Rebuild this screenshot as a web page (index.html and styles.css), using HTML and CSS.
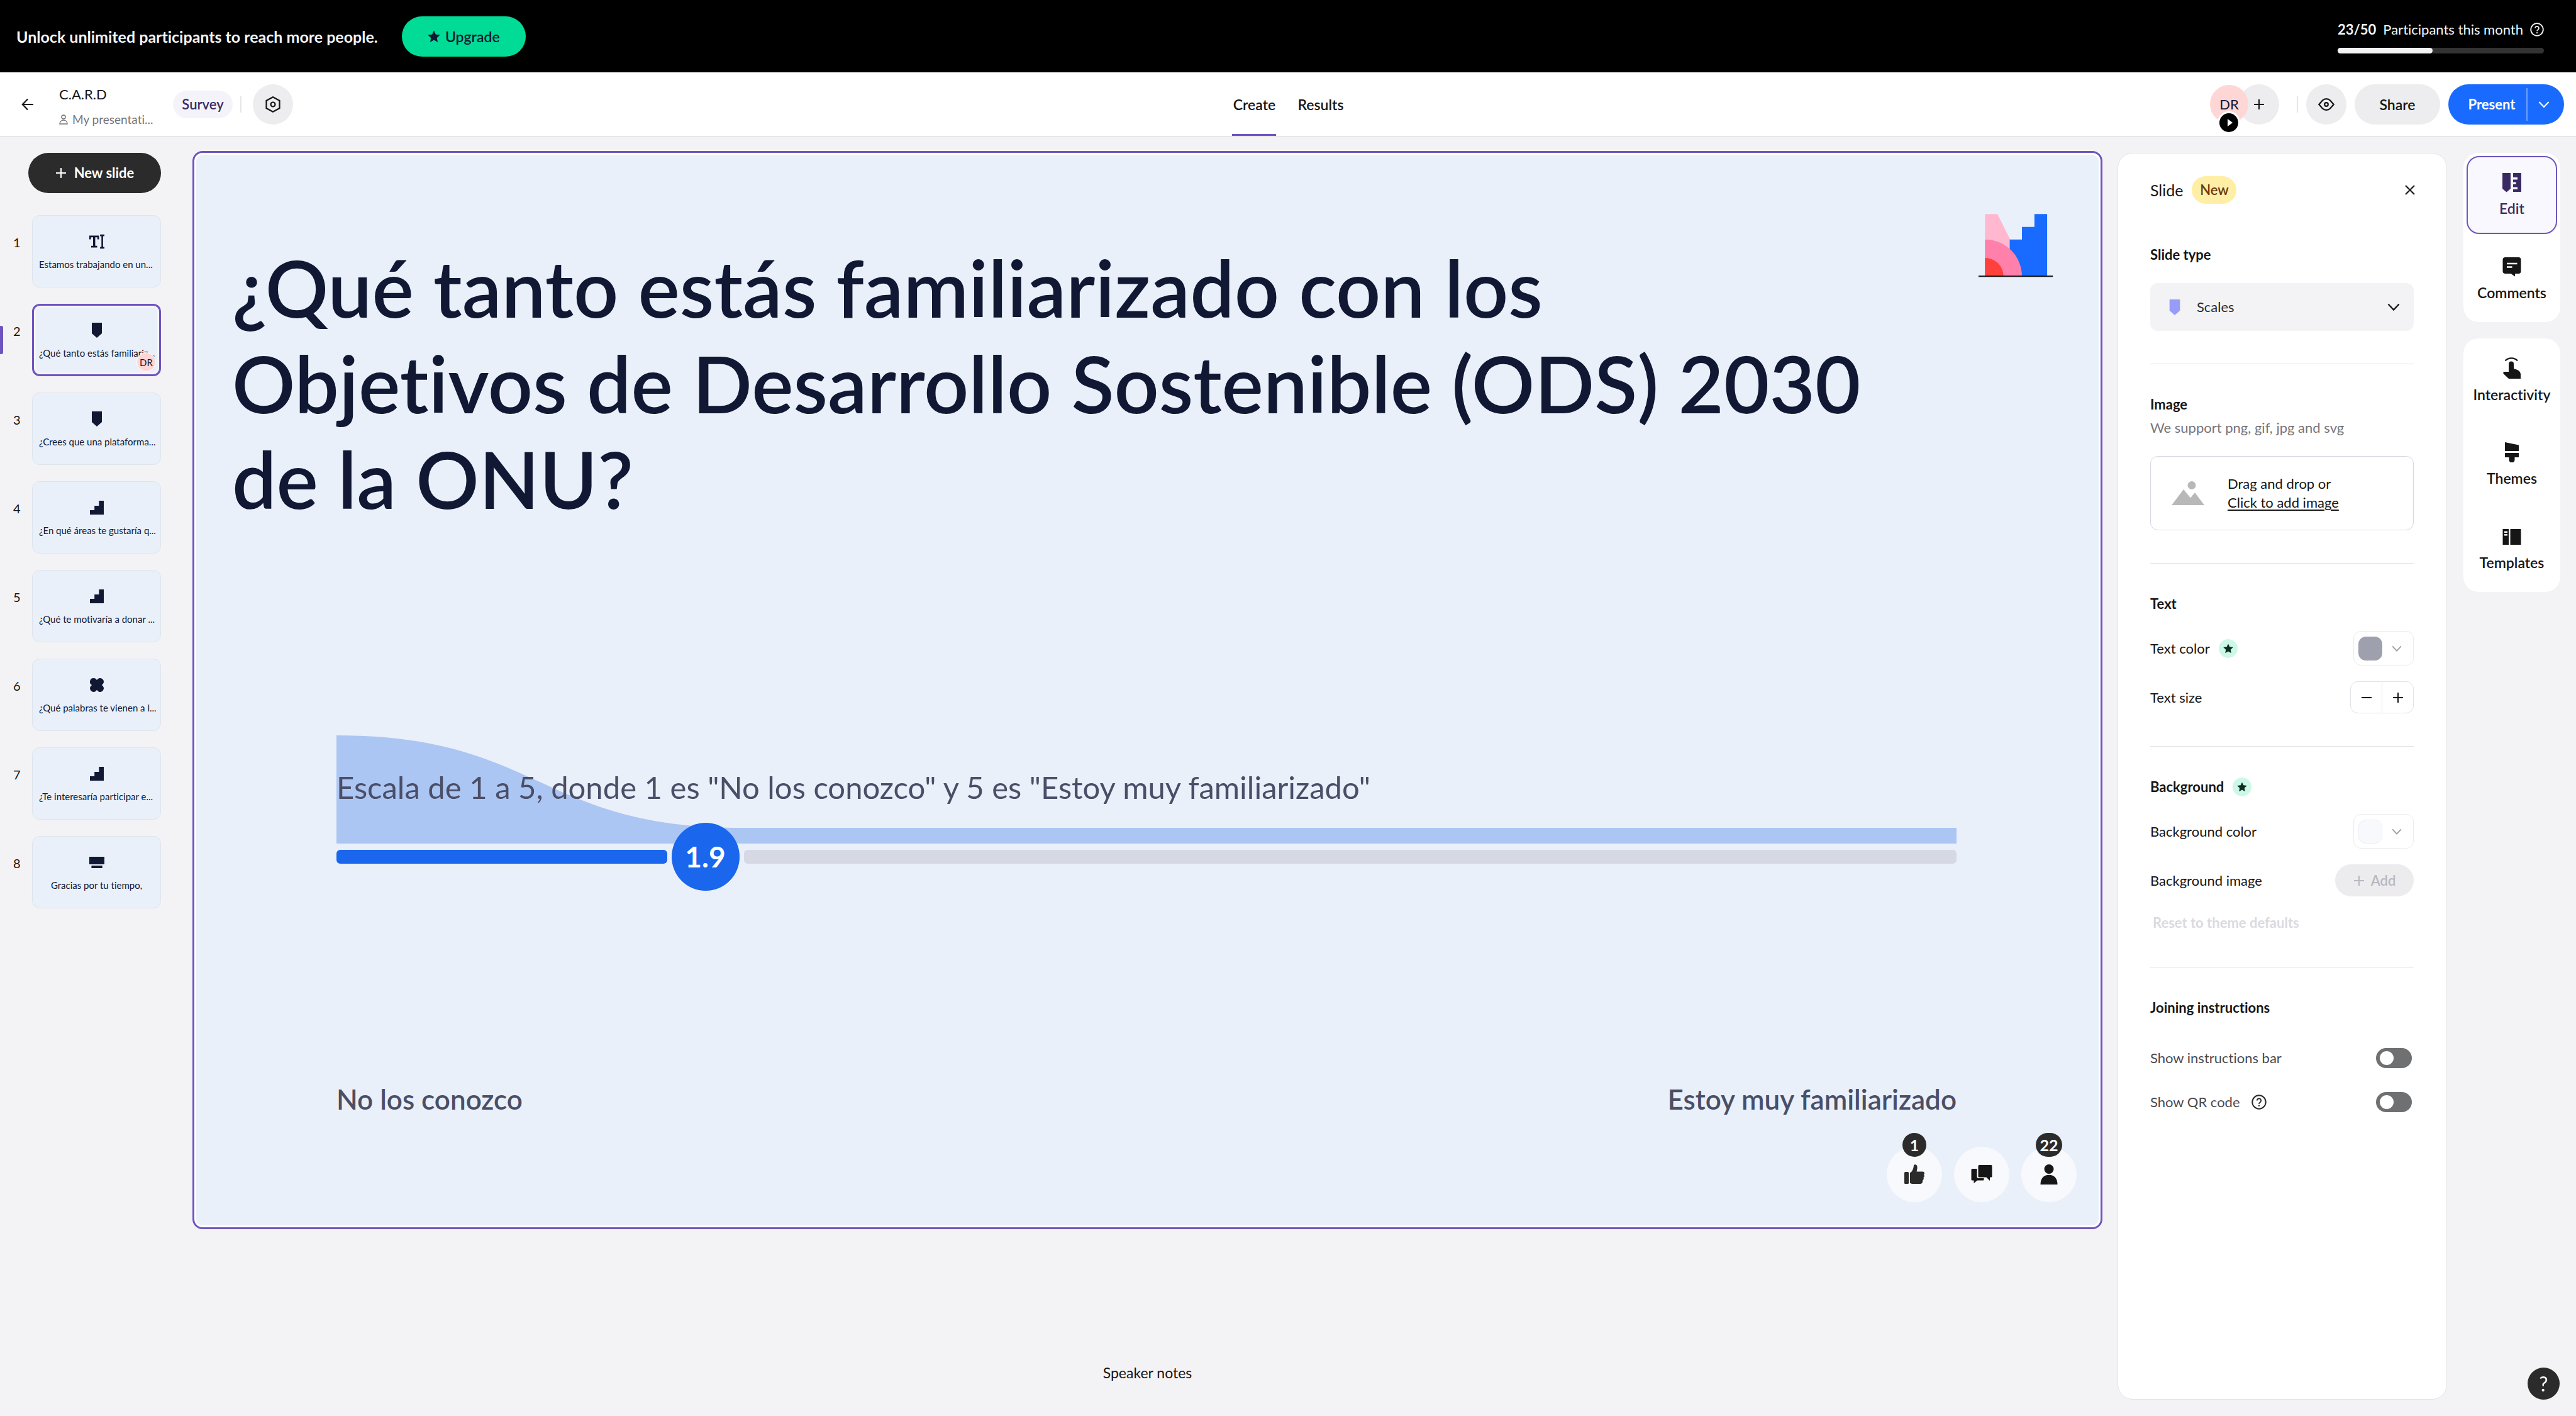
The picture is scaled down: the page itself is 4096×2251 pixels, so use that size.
FILE: index.html
```html
<!DOCTYPE html>
<html lang="en">
<head>
<meta charset="utf-8">
<meta name="viewport" content="width=device-width, initial-scale=1">
<title>C.A.R.D</title>
<link rel="stylesheet" href="styles.css">
</head>
<body>
<svg class="defs" aria-hidden="true">
  <symbol id="star" viewBox="0 0 20 20"><path d="M10 .5l2.900 6.200 6.800.8-5 4.700 1.300 6.800-6-3.400-6 3.400 1.300-6.800-5-4.700 6.800-.8z" fill="currentColor"/></symbol>
  <symbol id="plus" viewBox="0 0 18 18"><path d="M9 1v16M1 9h16" stroke="currentColor" stroke-width="2" fill="none"/></symbol>
  <symbol id="minus" viewBox="0 0 18 18"><path d="M1 9h16" stroke="currentColor" stroke-width="2" fill="none"/></symbol>
  <symbol id="chevron" viewBox="0 0 20 20"><path d="M1.500 5.500L10 14.500 18.500 5.500" stroke="currentColor" stroke-width="2.400" fill="none"/></symbol>
  <symbol id="question" viewBox="0 0 24 24"><circle cx="12" cy="12" r="10.700" stroke="currentColor" stroke-width="2" fill="none"/><path d="M8.800 9.600a3.200 3.200 0 1 1 5 2.600c-1.200.8-1.800 1.300-1.800 2.600" stroke="currentColor" stroke-width="1.900" fill="none"/><circle cx="12" cy="17.600" r="1.200" fill="currentColor"/></symbol>
  <symbol id="type-text" viewBox="0 0 28 26"><path d="M0 2h18v7h-3V5h-4v16h3.500v3h-11v-3H7V5H3v4H0z M20 0h8v3h-2.500v20H28v3h-8v-3h2.500V3H20z" fill="currentColor"/></symbol>
  <symbol id="type-scales" viewBox="0 0 16 24"><path d="M0 0h16v17l-8 7-8-7z" fill="currentColor"/></symbol>
  <symbol id="type-bars" viewBox="-1 -1 24 24"><path d="M0 15h7.200V8h7.200V0H22v22H0z" fill="currentColor"/></symbol>
  <symbol id="type-cloud" viewBox="-1 -1 24 24"><path d="M5.800 0A5.800 5.800 0 0 1 11 3.200 5.800 5.800 0 1 1 18.800 11 5.800 5.800 0 1 1 11 18.800 5.800 5.800 0 1 1 3.200 11 5.800 5.800 0 0 1 5.800 0z" fill="currentColor"/></symbol>
  <symbol id="type-end" viewBox="0 0 24 18"><path d="M0 0h24v12H0zM3.400 14h17.300v4H3.400z" fill="currentColor"/></symbol>
</svg>

<div class="app">
  <div class="banner">
    <div class="banner-offer">
      <p class="banner-text">Unlock unlimited participants to reach more people.</p>
      <button class="upgrade"><svg class="i20"><use href="#star"/></svg>Upgrade</button>
    </div>
    <div class="quota">
      <div class="quota-line"><strong>23/50</strong><span>Participants this month</span><svg class="i22"><use href="#question"/></svg></div>
      <div class="quota-bar"><div class="quota-fill" style="width:46%"></div></div>
    </div>
  </div>

  <header class="topbar">
    <div class="topbar-left">
      <button class="back" aria-label="Back"><svg width="20" height="20" viewBox="0 0 20 20"><path d="M10 1.500L1.800 10 10 18.500M2 10h17" stroke="currentColor" stroke-width="2.200" fill="none"/></svg></button>
      <div class="doc">
        <div class="doc-name">C.A.R.D</div>
        <a class="doc-folder" href="#"><svg width="14" height="16" viewBox="0 0 14 16"><circle cx="7" cy="4" r="3" stroke="currentColor" stroke-width="1.500" fill="none"/><path d="M1 15c0-8 12-8 12 0z" stroke="currentColor" stroke-width="1.500" fill="none"/></svg>My presentati...</a>
      </div>
      <span class="pill survey">Survey</span>
      <span class="divider"></span>
      <button class="round" aria-label="Settings"><svg width="24" height="26" viewBox="0 0 24 26"><path d="M12 1.300L22.500 7v12L12 24.700 1.500 19V7z" stroke="currentColor" stroke-width="2.200" fill="none"/><circle cx="12" cy="13" r="3.500" stroke="currentColor" stroke-width="2.200" fill="none"/></svg></button>
    </div>
    <nav class="tabs">
      <a class="tab tab-on" href="#">Create</a>
      <a class="tab" href="#">Results</a>
    </nav>
    <div class="topbar-right">
      <div class="avatar">DR<span class="live"><svg width="8" height="12" viewBox="0 0 8 12"><path d="M0 0l8 6-8 6z" fill="#fff"/></svg></span></div>
      <button class="round invite" aria-label="Invite"><svg class="i18"><use href="#plus"/></svg></button>
      <span class="divider"></span>
      <button class="round" aria-label="Preview"><svg width="26" height="20" viewBox="0 0 26 20"><path d="M1.300 10L7 3.500Q9.500 1.200 13 1.200T19 3.500L24.700 10 19 16.500Q16.500 18.800 13 18.800T7 16.500z" stroke="currentColor" stroke-width="2.200" fill="none"/><circle cx="13" cy="10" r="2.800" stroke="currentColor" stroke-width="2.200" fill="none"/></svg></button>
      <button class="share">Share</button>
      <div class="present">
        <button class="present-main">Present</button>
        <button class="present-more" aria-label="Present options"><svg class="i18"><use href="#chevron"/></svg></button>
      </div>
    </div>
  </header>

  <main class="workspace">
    <aside class="slides">
      <button class="new-slide"><svg class="i18"><use href="#plus"/></svg>New slide</button>
      <ol class="slide-list">
        <li class="slide-item"><span class="slide-no">1</span><a class="thumb" href="#"><svg class="thumb-icon"><use href="#type-text"/></svg><span class="thumb-text">Estamos trabajando en un...</span></a></li>
        <li class="slide-item current"><span class="slide-no">2</span><a class="thumb" href="#"><svg class="thumb-icon"><use href="#type-scales"/></svg><span class="thumb-text">¿Qué tanto estás familiariz...</span><span class="thumb-user">DR</span></a></li>
        <li class="slide-item"><span class="slide-no">3</span><a class="thumb" href="#"><svg class="thumb-icon"><use href="#type-scales"/></svg><span class="thumb-text">¿Crees que una plataforma...</span></a></li>
        <li class="slide-item"><span class="slide-no">4</span><a class="thumb" href="#"><svg class="thumb-icon"><use href="#type-bars"/></svg><span class="thumb-text">¿En qué áreas te gustaría q...</span></a></li>
        <li class="slide-item"><span class="slide-no">5</span><a class="thumb" href="#"><svg class="thumb-icon"><use href="#type-bars"/></svg><span class="thumb-text">¿Qué te motivaría a donar ...</span></a></li>
        <li class="slide-item"><span class="slide-no">6</span><a class="thumb" href="#"><svg class="thumb-icon"><use href="#type-cloud"/></svg><span class="thumb-text">¿Qué palabras te vienen a l...</span></a></li>
        <li class="slide-item"><span class="slide-no">7</span><a class="thumb" href="#"><svg class="thumb-icon"><use href="#type-bars"/></svg><span class="thumb-text">¿Te interesaría participar e...</span></a></li>
        <li class="slide-item"><span class="slide-no">8</span><a class="thumb" href="#"><svg class="thumb-icon"><use href="#type-end"/></svg><span class="thumb-text short">Gracias por tu tiempo,</span></a></li>
      </ol>
    </aside>

    <section class="stage">
      <div class="canvas">
        <div class="slide">
          <div class="slide-head">
            <h1 class="question">¿Qué tanto estás familiarizado con los<br>Objetivos de Desarrollo Sostenible (ODS) 2030<br>de la ONU?</h1>
            <svg class="logo" viewBox="0 0 150 128"><path d="M13 0h25l25 50v74H13z" fill="#ffb8d0"/><path d="M62.500 51H87V26h25V0h25.500v124h-75z" fill="#196bff"/><path d="M13 51a74 74 0 0 1 74 73H13z" fill="#ff80aa"/><path d="M13 88a37 37 0 0 1 37 36H13z" fill="#ff403d"/><path d="M0 124.800h149" stroke="#1c1c1c" stroke-width="2.800"/></svg>
          </div>
          <div class="scale">
            <div class="spread">
              <svg class="spread-area" viewBox="0 0 4 172" preserveAspectRatio="none"><path d="M0 0C.5 0 .5 147 1 147H4V172H0z" fill="#acc6f4"/></svg>
              <p class="statement">Escala de 1 a 5, donde 1 es "No los conozco" y 5 es "Estoy muy familiarizado"</p>
            </div>
            <div class="track">
              <div class="track-fill" style="width:20.4%"></div>
              <div class="track-value">1.9</div>
              <div class="track-rest"></div>
            </div>
            <div class="ends"><span>No los conozco</span><span>Estoy muy familiarizado</span></div>
          </div>
          <div class="reactions">
            <button class="reaction" aria-label="Likes"><span class="count">1</span><svg width="32" height="32" viewBox="0 0 32 32" fill="#2b2b2b"><rect x="0" y="12" width="7" height="19" rx="1.500"/><path d="M9 13.500c3.500-2 5.500-6 6-11.500.2-2.400 5-2.700 5.500 1.500.3 3-.3 5.600-1 8h9.700c3 0 3.600 3.500 1.700 4.900 1.400 1.400 1 3.900-.6 4.700 1 1.600.3 3.600-1.200 4.300.5 2.400-.6 5.600-3.400 5.600H14c-2 0-3.600-.5-5-1.600z"/></svg></button>
            <button class="reaction" aria-label="Chat"><svg width="34" height="30" viewBox="0 0 34 30" fill="#161616"><path d="M2 6h7.500v12.500a2.500 2.500 0 0 0 2.500 2.500h8.500v2a1.500 1.500 0 0 1-1.500 1.500h-9L4.500 29v-4.500H2A1.500 1.500 0 0 1 .5 23V7.500A1.500 1.500 0 0 1 2 6z"/><path d="M13 0h19a1.500 1.500 0 0 1 1.500 1.500V18a1.500 1.500 0 0 1-1.500 1.500h-2V25l-5.500-5.500H13a1.500 1.500 0 0 1-1.500-1.500V1.500A1.500 1.500 0 0 1 13 0z"/></svg></button>
            <button class="reaction" aria-label="Participants"><span class="count">22</span><svg width="28" height="32" viewBox="0 0 28 32" fill="#161616"><circle cx="14" cy="7.500" r="7.500"/><path d="M.5 32c0-9.500 5-15.200 13.500-15.200S27.500 22.500 27.500 32z"/></svg></button>
          </div>
        </div>
      </div>
      <button class="notes">Speaker notes</button>
    </section>

    <aside class="panel">
      <div class="panel-head"><h2 class="panel-title">Slide</h2><span class="pill new">New</span><button class="close" aria-label="Close"><svg width="16" height="16" viewBox="0 0 16 16"><path d="M1 1l14 14M15 1L1 15" stroke="currentColor" stroke-width="2.200"/></svg></button></div>

      <section class="group first">
        <label class="group-title" for="slide-type">Slide type</label>
        <div class="select">
          <svg class="select-icon"><use href="#type-scales"/></svg>
          <select id="slide-type"><option>Scales</option></select>
          <svg class="select-arrow"><use href="#chevron"/></svg>
        </div>
      </section>

      <section class="group">
        <h3 class="group-title">Image</h3>
        <p class="hint">We support png, gif, jpg and svg</p>
        <div class="drop">
          <svg width="52" height="38" viewBox="0 0 52 38" fill="#b8b8b8"><path d="M0 38L19 13l11 13.500 7-8.500 15 20z"/><circle cx="32" cy="6.500" r="6.500"/></svg>
          <p class="drop-text">Drag and drop or<br><a href="#">Click to add image</a></p>
        </div>
      </section>

      <section class="group">
        <h3 class="group-title">Text</h3>
        <div class="row colour"><span>Text color</span><span class="premium"><svg class="i16"><use href="#star"/></svg></span><button class="swatch" aria-label="Text color"><span class="chip ink"></span><svg class="i16"><use href="#chevron"/></svg></button></div>
        <div class="row"><span>Text size</span><div class="stepper"><button aria-label="Smaller"><svg class="i18"><use href="#minus"/></svg></button><button aria-label="Larger"><svg class="i18"><use href="#plus"/></svg></button></div></div>
      </section>

      <section class="group">
        <h3 class="group-title with-badge">Background<span class="premium"><svg class="i16"><use href="#star"/></svg></span></h3>
        <div class="row colour"><span>Background color</span><button class="swatch" aria-label="Background color"><span class="chip paper"></span><svg class="i16"><use href="#chevron"/></svg></button></div>
        <div class="row"><span>Background image</span><button class="add" disabled><svg class="i18"><use href="#plus"/></svg>Add</button></div>
        <button class="reset" disabled>Reset to theme defaults</button>
      </section>

      <section class="group">
        <h3 class="group-title">Joining instructions</h3>
        <div class="toggle-row"><label for="bar">Show instructions bar</label><input class="toggle" type="checkbox" id="bar"></div>
        <div class="toggle-row"><label for="qr">Show QR code</label><svg class="i24"><use href="#question"/></svg><input class="toggle" type="checkbox" id="qr"></div>
      </section>
    </aside>

    <nav class="rail">
      <div class="rail-card">
        <button class="tool tool-on"><svg width="30" height="32" viewBox="0 0 30 32" fill="currentColor"><path d="M0 1h13v25l-6.500 5.500L0 26z"/><path d="M17 1h13v30H17v-4h7v-3.500h-7V19h4.500v-3.500H17V11.500h7V8h-7z"/></svg>Edit</button>
        <button class="tool"><svg width="30" height="32" viewBox="0 0 30 32"><path d="M4.500 1h21A4 4 0 0 1 29.500 5v18a4 4 0 0 1-4 4H20v4.500L13.500 27h-9a4 4 0 0 1-4-4V5a4 4 0 0 1 4-4z" fill="currentColor"/><path d="M7 11h16.500M7 16.500h8.500" stroke="#fff" stroke-width="2.600"/></svg>Comments</button>
      </div>
      <div class="rail-card">
        <button class="tool"><svg width="28" height="34" viewBox="0 0 28 34" fill="currentColor"><path d="M3.500 5.500c5-5.500 14.500-5.500 19.500 0" stroke="currentColor" stroke-width="2.400" fill="none"/><path d="M9 10.500a4 4 0 0 1 8 0V18c6.500 1.800 11 4 11 9.500V34H9L.5 26v-3H9z"/></svg>Interactivity</button>
        <button class="tool"><svg width="22" height="32" viewBox="0 0 22 32" fill="currentColor"><path d="M0 0l22 4.500V14H0zM0 17h22v7h-6.500v4a4.500 4.500 0 0 1-9 0v-4H0z"/></svg>Themes</button>
        <button class="tool"><svg width="30" height="32" viewBox="0 0 30 32" fill="currentColor"><path fill-rule="evenodd" d="M.5 4H10v25H.5zM3 7.500V10h5V7.500zM3 12v2.500h5V12z"/><path d="M12.500 4h17v25h-17z"/></svg>Templates</button>
      </div>
    </nav>
  </main>
</div>
<button class="help" aria-label="Help">?</button>
</body>
</html>
```

FILE: styles.css
```css
* { box-sizing: border-box; }

body {
  margin: 0;
  background: #f3f3f6;
  color: #161616;
  font-family: Lato, "Open Sans", sans-serif;
  font-size: 22px;
  font-variant-ligatures: none;
  line-height: 30px;
}

h1, h2, h3, p, ol { margin: 0; padding: 0; font-weight: 400; }
ol { list-style: none; }
a { color: inherit; text-decoration: none; }
svg { display: block; flex: none; }

button {
  display: flex;
  align-items: center;
  justify-content: center;
  margin: 0;
  padding: 0;
  border: 0;
  background: none;
  color: inherit;
  font: inherit;
  cursor: pointer;
}

.defs { position: absolute; width: 0; height: 0; }
.i16 { width: 16px; height: 16px; }
.i18 { width: 18px; height: 18px; }
.i20 { width: 20px; height: 20px; }
.i22 { width: 22px; height: 22px; }
.i24 { width: 24px; height: 24px; }

.app { display: flex; flex-direction: column; min-height: 100vh; }

/* Upgrade banner */
.banner {
  display: flex;
  align-items: center;
  justify-content: space-between;
  padding: 26px 51px 25px 26px;
  background: #000;
  color: #f4f4f6;
}
.banner-offer { display: flex; align-items: center; gap: 38px; }
.banner-text { font-size: 25px; font-weight: 700; }
.upgrade {
  gap: 8px;
  width: 197px;
  height: 64px;
  border-radius: 32px;
  background: #00dc95;
  color: #101834;
  font-size: 23px;
  font-weight: 600;
}
.quota { width: 328px; }
.quota-line { display: flex; align-items: center; justify-content: space-between; white-space: nowrap; }
.quota-bar { height: 9px; margin-top: 14px; border-radius: 5px; background: #333; }
.quota-fill { height: 100%; border-radius: 5px; background: #f4f4f6; }

/* Top bar */
.topbar {
  display: grid;
  grid-template-columns: 1fr auto 1fr;
  align-items: center;
  height: 103px;
  padding: 0 19px;
  border-bottom: 2px solid #e6e6e8;
  background: #fff;
}
.topbar-left, .topbar-right { display: flex; align-items: center; }
.topbar-right { justify-content: flex-end; }
.back { width: 32px; height: 32px; margin-left: 9px; }
.doc { width: 148px; margin-left: 34px; padding-top: 9px; white-space: nowrap; }
.doc-name { margin-bottom: 10px; }
.doc-folder { display: flex; align-items: center; gap: 7px; color: #75757a; font-size: 19px; }
.pill { display: inline-flex; align-items: center; justify-content: center; height: 44px; border-radius: 22px; font-weight: 600; }
.survey { width: 95px; margin-left: 33px; background: #f4f3fa; color: #3a2d66; }
.divider { width: 2px; height: 26px; margin: 0 18px 0 12px; background: #e6e6e8; }
.topbar-right .divider { margin: 0 13px 0 28px; }
.round { width: 64px; height: 64px; border-radius: 50%; background: #ededef; }

.tabs { display: flex; align-self: stretch; gap: 34px; }
.tab { display: flex; align-items: center; justify-content: center; min-width: 70px; padding-top: 3px; border-bottom: 3px solid transparent; font-size: 23px; font-weight: 600; }
.tab-on { border-color: #6f54bf; }

.avatar {
  position: relative;
  display: flex;
  align-items: center;
  justify-content: center;
  width: 61px;
  height: 61px;
  border-radius: 50%;
  background: #ffd6d6;
  color: #101834;
}
.live {
  position: absolute;
  left: 12px;
  top: 42px;
  display: flex;
  align-items: center;
  justify-content: center;
  width: 36px;
  height: 36px;
  padding-left: 4px;
  border: 3px solid #fff;
  border-radius: 50%;
  background: #000;
}
.invite { margin-left: -15px; }
.share { width: 136px; height: 64px; margin: 0 13px; border-radius: 32px; background: #ededef; font-size: 23px; font-weight: 600; }
.present { display: flex; align-items: center; width: 184px; height: 64px; border-radius: 32px; background: #196bff; color: #fff; }
.present-main { width: 126px; height: 52px; padding-left: 14px; border-right: 2px solid #6ea1ff; font-weight: 700; }
.present-more { flex: 1; height: 52px; padding-right: 6px; }

/* Workspace */
.workspace { flex: 1; display: grid; grid-template-columns: 306px minmax(0, 1fr) 24px 524px 26px 154px 25px; }
.slides { grid-column: 1; padding-top: 25px; }
.stage { grid-column: 2; }
.panel { grid-column: 4; }
.rail { grid-column: 6; }

.new-slide {
  gap: 12px;
  width: 211px;
  height: 64px;
  margin-left: 45px;
  border-radius: 32px;
  background: #2b2b2b;
  color: #fff;
  font-weight: 700;
}
.slide-list { display: flex; flex-direction: column; gap: 26px; margin-top: 35px; }
.slide-item { position: relative; display: flex; padding-left: 21px; }
.slide-item.current::before {
  content: "";
  position: absolute;
  left: 0;
  top: 35px;
  width: 5px;
  height: 45px;
  border-radius: 0 3px 3px 0;
  background: #6e54bf;
}
.slide-no { width: 30px; padding-top: 28px; font-size: 20px; }
.thumb {
  position: relative;
  display: flex;
  flex-direction: column;
  align-items: center;
  width: 205px;
  height: 115px;
  padding: 29px 10px 0;
  border: 1px solid #dfe4ec;
  border-radius: 12px;
  background: #e9f0f9;
  color: #101834;
}
.current .thumb { padding: 27px 8px 0; border: 3px solid #6e54bf; box-shadow: inset 0 0 0 3px #f4f4f8; }
.thumb-icon { width: 24px; height: 24px; }
.thumb-text { width: 100%; margin-top: 14px; font-size: 15px; line-height: 20px; white-space: nowrap; }
.thumb-text.short { text-align: center; }
.thumb-user {
  position: absolute;
  right: 5px;
  bottom: 4px;
  display: flex;
  align-items: center;
  justify-content: center;
  width: 31px;
  height: 31px;
  border: 1px solid #fff;
  border-radius: 50%;
  background: #ffd6d6;
  font-size: 15px;
}

/* Slide canvas */
.stage { display: flex; flex-direction: column; padding: 22px 0 54px; }
.canvas { padding: 3px; border: 3px solid #6e54bf; border-radius: 16px; background: #fff; }
.slide {
  display: flex;
  flex-direction: column;
  aspect-ratio: 16 / 9;
  border-radius: 10px;
  background: #e9f0f9;
  color: #4a4e67;
}
.slide-head { display: flex; justify-content: space-between; align-items: flex-start; padding: 94px 72px 0 57px; }
.question { padding-top: 41px; color: #101834; font-size: 125px; font-weight: 600; line-height: 152px; white-space: nowrap; }
.logo { width: 119px; height: 102px; }
.scale { margin-top: 332px; padding: 0 226px 0 223px; }
.spread { position: relative; height: 172px; }
.spread-area { width: 100%; height: 100%; }
.statement { position: absolute; left: 0; top: 52px; font-size: 49px; line-height: 60px; white-space: nowrap; }
.track { display: flex; height: 22px; margin-top: 10px; }
.track-fill { flex: none; border-radius: 6px; background: #1a66ec; }
.track-value {
  display: flex;
  flex: none;
  align-items: center;
  justify-content: center;
  width: 108px;
  height: 108px;
  margin: -43px 7px;
  z-index: 1;
  border-radius: 50%;
  background: #1a66ec;
  color: #fff;
  font-size: 46px;
  font-weight: 700;
}
.track-rest { flex: 1; border-radius: 6px; background: #d6d9e4; }
.ends { display: flex; justify-content: space-between; margin-top: 348px; font-size: 44px; font-weight: 600; line-height: 52px; }
.reactions { display: flex; justify-content: flex-end; gap: 19px; margin-top: auto; padding: 0 35px 37px; }
.reaction { position: relative; width: 88px; height: 88px; border-radius: 50%; background: #f8f9fd; }
.count {
  position: absolute;
  top: -22px;
  display: flex;
  align-items: center;
  justify-content: center;
  min-width: 38px;
  height: 38px;
  padding: 0 6px;
  border-radius: 19px;
  background: #2b2b2b;
  color: #fff;
  font-size: 25px;
  font-weight: 700;
}
.notes { align-self: center; margin-top: auto; font-size: 23px; }

/* Settings panel */
.panel { margin: 25px 0 26px; padding: 36px 52px 0 51px; border: 1px solid #e2e3e7; border-radius: 24px; background: #fff; }
.panel-head { display: flex; align-items: center; }
.panel-title { font-size: 25px; }
.new { width: 71px; margin-left: 14px; background: #ffeea6; color: #6b3a0d; }
.close { width: 32px; height: 32px; margin: 0 -10px 0 auto; }
.group { display: flex; flex-direction: column; padding: 49px 0 52px; border-top: 1px solid #e2e3e7; }
.group.first { padding-top: 66px; border-top: 0; }
.group-title { font-size: 22px; font-weight: 700; }
.with-badge { display: flex; align-items: center; }
.select { position: relative; margin-top: 30px; }
.select select {
  width: 100%;
  height: 76px;
  padding: 0 74px;
  border: 0;
  border-radius: 12px;
  appearance: none;
  background: #f3f3f6;
  color: #2b2b2b;
  font: inherit;
}
.select-icon { position: absolute; left: 30px; top: 26px; width: 18px; height: 25px; color: #979cf8; }
.select-arrow { position: absolute; right: 22px; top: 28px; width: 20px; height: 20px; }
.hint { margin-top: 7px; color: #75757a; }
.drop { display: flex; align-items: center; gap: 37px; height: 118px; margin-top: 30px; padding-left: 33px; border: 1px solid #d6d8e0; border-radius: 12px; }
.drop a { text-decoration: underline; text-underline-offset: 3px; }
.row { display: flex; align-items: center; justify-content: space-between; margin-top: 25px; }
.row.colour { margin-top: 28px; }
.premium { display: flex; align-items: center; justify-content: center; width: 30px; height: 30px; margin: 0 auto 0 14px; border-radius: 50%; background: #cdf8e8; color: #0b2d21; }
.swatch { justify-content: flex-start; gap: 15px; width: 96px; height: 55px; padding-left: 7px; border: 1px solid #ececee; border-radius: 12px; color: #a0a0a4; }
.chip { width: 38px; height: 38px; border-radius: 12px; }
.ink { background: #9ea1ad; }
.paper { border: 1px solid #eceef6; background: #f8f9fd; }
.stepper { display: flex; width: 101px; height: 51px; border: 1px solid #e2e3e7; border-radius: 12px; }
.stepper button { flex: 1; }
.stepper button + button { border-left: 1px solid #e2e3e7; }
.add { gap: 10px; width: 125px; height: 51px; border-radius: 26px; background: #ececee; color: #b8b8c0; font-weight: 600; }
.reset { align-self: flex-start; margin: 27px 0 3px 4px; color: #dadae0; font-weight: 700; }
.toggle-row { display: flex; align-items: center; gap: 18px; height: 32px; margin-top: 38px; color: #4a4a4e; }
.group-title + .toggle-row { margin-top: 49px; }
.toggle-row svg { color: #2b2b2b; }
.toggle { position: relative; appearance: none; width: 57px; height: 32px; margin: 0 3px 0 auto; border-radius: 16px; background: #6f7072; }
.toggle::before { content: ""; position: absolute; left: 6px; top: 5px; width: 22px; height: 22px; border-radius: 50%; background: #fff; }

/* Tool rail */
.rail { display: flex; flex-direction: column; gap: 26px; padding-top: 25px; }
.rail-card { display: flex; flex-direction: column; gap: 10px; padding: 5px 5px 6px; border-radius: 24px; background: #fff; }
.tool { flex-direction: column; gap: 10px; height: 124px; border: 2px solid transparent; border-radius: 20px; font-size: 23px; font-weight: 600; }
.tool-on { border-color: #6f54bf; background: #f8f8fe; color: #3a2a63; }

.help {
  position: fixed;
  right: 26px;
  bottom: 26px;
  width: 51px;
  height: 51px;
  border-radius: 50%;
  background: #2b2b2b;
  color: #fff;
  font-size: 32px;
}
```
